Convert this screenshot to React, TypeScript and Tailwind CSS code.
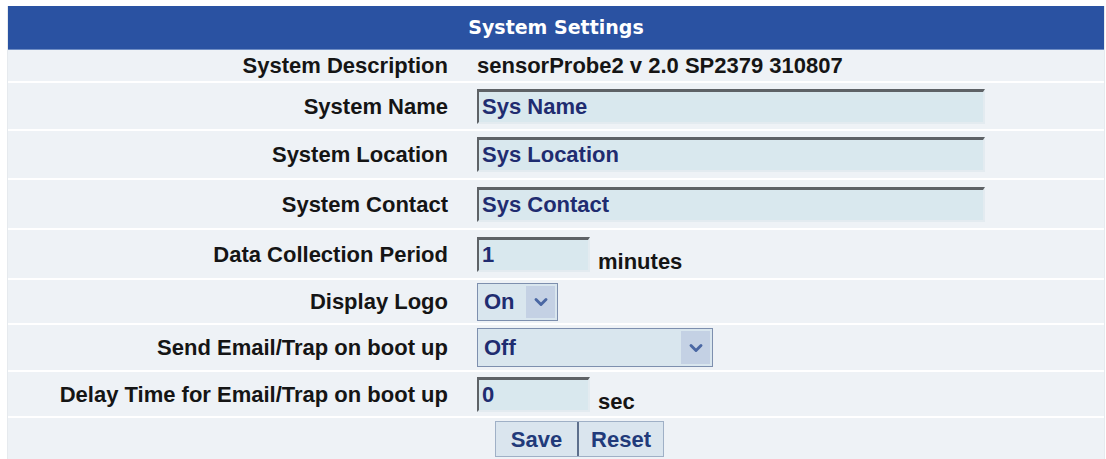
import { ChevronDown } from "lucide-react";
import type { ReactNode } from "react";

const labelFont = { fontFamily: '"Liberation Sans", Arial, sans-serif' };

function Row({
  label,
  height,
  children,
}: {
  label?: string;
  height: string;
  children: ReactNode;
}) {
  return (
    <div className={`flex items-center border-b-2 border-white ${height}`}>
      <div className="w-[440px] shrink-0 text-right text-[22px] font-bold text-[#151515]">
        {label}
      </div>
      <div className="flex items-center pl-[29px]">{children}</div>
    </div>
  );
}

function TextBox({ value, width }: { value: string; width: string }) {
  return (
    <input
      readOnly
      defaultValue={value}
      className={`h-[35px] ${width} border-2 border-t-[3px] border-t-[#5e6266] border-l-[#5e6266] border-r-[#e3ebf0] border-b-[#e3ebf0] bg-[#d9e8ee] px-[3px] text-[22px] font-bold text-[#1f2c70] outline-none`}
    />
  );
}

function SelectBox({
  value,
  width,
  height,
}: {
  value: string;
  width: string;
  height: string;
}) {
  return (
    <div
      className={`flex ${width} ${height} items-stretch border border-[#7d8fae] bg-[#d9e6ee] p-[2px]`}
    >
      <div className="flex flex-1 items-center px-[4px] text-[22px] font-bold text-[#1f2c70]">
        {value}
      </div>
      <div className="flex w-[29px] items-center justify-center bg-[#c4d1e4]">
        <ChevronDown size={20} strokeWidth={3.5} className="text-[#4a67a3]" />
      </div>
    </div>
  );
}

export default function App() {
  return (
    <div className="h-[459px] overflow-hidden bg-white pl-[7px] pt-[6px]" style={labelFont}>
      <div className="w-[1098px] border-x border-[#e6eaee] bg-[#eef2f6]">
        <div
          className="flex h-[44px] items-center justify-center border-b border-[#6f8dc4] bg-[#2a52a2] text-[19px] font-bold text-white"
          style={{ fontFamily: '"DejaVu Sans", Verdana, sans-serif' }}
        >
          System Settings
        </div>

        <Row label="System Description" height="h-[33px]">
          <span className="text-[22px] font-bold text-[#151515]">
            sensorProbe2 v 2.0 SP2379 310807
          </span>
        </Row>
        <Row label="System Name" height="h-[48px]">
          <TextBox value="Sys Name" width="w-[508px]" />
        </Row>
        <Row label="System Location" height="h-[49px]">
          <TextBox value="Sys Location" width="w-[508px]" />
        </Row>
        <Row label="System Contact" height="h-[50px]">
          <TextBox value="Sys Contact" width="w-[508px]" />
        </Row>
        <Row label="Data Collection Period" height="h-[50px]">
          <TextBox value="1" width="w-[113px]" />
          <span className="ml-[8px] mt-[14px] text-[22px] font-bold text-[#151515]">
            minutes
          </span>
        </Row>
        <Row label="Display Logo" height="h-[45px]">
          <SelectBox value="On" width="w-[81px]" height="h-[38px]" />
        </Row>
        <Row label="Send Email/Trap on boot up" height="h-[47px]">
          <SelectBox value="Off" width="w-[236px]" height="h-[39px]" />
        </Row>
        <Row label="Delay Time for Email/Trap on boot up" height="h-[46px]">
          <TextBox value="0" width="w-[113px]" />
          <span className="ml-[8px] mt-[14px] text-[22px] font-bold text-[#151515]">
            sec
          </span>
        </Row>
        <Row height="h-[44px]">
          <div className="ml-[18px] flex h-[36px] border border-[#9fb0c6] bg-[#dae5ee] text-[22px] font-bold text-[#213a7a]">
            <button type="button" className="w-[83px] border-r-2 border-[#5d6f8c] font-bold">
              Save
            </button>
            <button type="button" className="w-[84px] font-bold">
              Reset
            </button>
          </div>
        </Row>
      </div>
    </div>
  );
}
